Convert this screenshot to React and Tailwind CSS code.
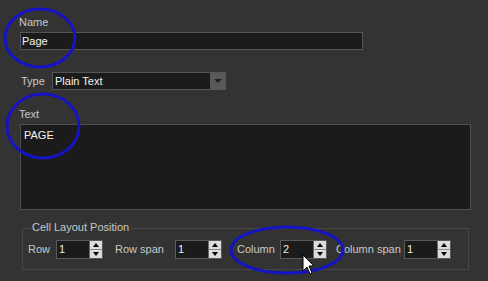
import React from 'react';

const font = { fontFamily: '"Liberation Sans", Arial, sans-serif' };

// spin box with up/down buttons
const SpinBox = ({ value }) => (
  <div className="flex h-[19px] w-[47px] border border-[#5a5a5a] bg-[#1b1b1b]">
    <div className="flex-1 pl-[2px] text-[11px] leading-[17px] text-[#eeeeee]">{value}</div>
    <div className="flex w-[13px] flex-col border-l border-[#6a6a6a] bg-[#dcdcdc]">
      <div className="flex flex-1 items-center justify-center border-b border-[#8a8a8a]">
        <div className="h-0 w-0 border-x-[3px] border-b-[4px] border-x-transparent border-b-black"></div>
      </div>
      <div className="flex flex-1 items-center justify-center">
        <div className="h-0 w-0 border-x-[3px] border-t-[4px] border-x-transparent border-t-black"></div>
      </div>
    </div>
  </div>
);

const App = () => {
  return (
    <div
      className="relative h-[281px] w-[488px] overflow-hidden bg-[#333333] pl-[20px] pt-[16px] text-[11px] text-[#c8c8c8]"
      style={font}
    >
      {/* Name */}
      <div className="-ml-[1px] leading-[13px]">Name</div>
      <div className="mt-[3px] h-[18px] w-[343px] border border-[#555555] bg-[#1b1b1b] pl-[1px] text-[11px] leading-[16px] text-[#f4f4f4]">
        Page
      </div>

      {/* Type */}
      <div className="mt-[22px] flex items-center">
        <div className="ml-[1px] w-[31px] leading-[13px]">Type</div>
        <div className="flex h-[18px] w-[174px] border border-[#555555] bg-[#1b1b1b]">
          <div className="flex-1 pl-[2px] text-[11px] leading-[16px] text-[#f4f4f4]">Plain Text</div>
          <div className="flex w-[15px] items-center justify-center bg-[#5a5a5a]">
            <div className="h-0 w-0 border-x-[4px] border-t-[4px] border-x-transparent border-t-[#1e1e1e]"></div>
          </div>
        </div>
      </div>

      {/* Text */}
      <div className="-ml-[1px] mt-[18px] leading-[13px]">Text</div>
      <div className="mt-[3px] h-[86px] w-[451px] border border-[#4e4e4e] bg-[#1b1b1b] pl-[3px] pt-[2px] text-[11px] leading-[16px] text-[#f4f4f4]">
        PAGE
      </div>

      {/* Cell Layout Position */}
      <div className="relative ml-[2px] mt-[18px] h-[42px] w-[447px] border border-[#474747]">
        <div className="absolute -top-[8px] left-[8px] bg-[#333333] px-[1px] leading-[13px]">Cell Layout Position</div>
        <div className="flex items-center pl-[5px] pt-[11px]">
          <div className="w-[28px]">Row</div>
          <SpinBox value="1" />
          <div className="ml-[12px] w-[60px]">Row span</div>
          <SpinBox value="1" />
          <div className="ml-[15px] w-[43px]">Column</div>
          <SpinBox value="2" />
          <div className="ml-[9px] w-[68px]">Column span</div>
          <SpinBox value="1" />
        </div>
      </div>

      {/* annotations + cursor */}
      <svg className="pointer-events-none absolute left-0 top-0" width="488" height="281">
        <ellipse cx="40" cy="38" rx="35" ry="29" fill="none" stroke="#1414c4" strokeWidth="3" />
        <ellipse cx="43" cy="126" rx="36" ry="32" fill="none" stroke="#1414c4" strokeWidth="3" />
        <ellipse cx="287" cy="250" rx="56" ry="23" fill="none" stroke="#1414c4" strokeWidth="3" />
        <path
          d="M303 255 L303 271 L307 267 L310 274 L312 273 L309 266 L314 266 Z"
          fill="#ffffff"
          stroke="#000000"
          strokeWidth="1"
          strokeLinejoin="round"
        />
      </svg>
    </div>
  );
};

export default App;
